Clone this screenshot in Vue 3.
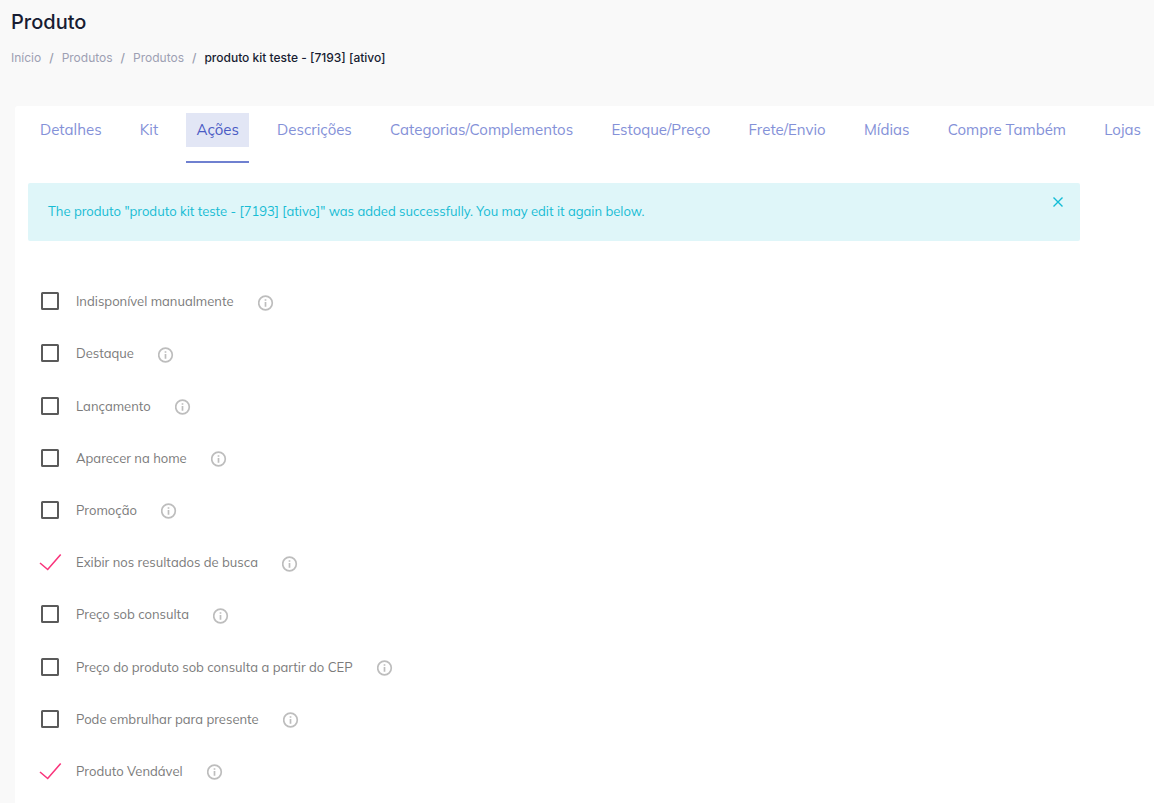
<script setup>
import { ref } from 'vue'

const crumbs = ['Início', 'Produtos', 'Produtos']
const tabs = [
  'Detalhes',
  'Kit',
  'Ações',
  'Descrições',
  'Categorias/Complementos',
  'Estoque/Preço',
  'Frete/Envio',
  'Mídias',
  'Compre Também',
  'Lojas',
]
const activeTab = ref('Ações')
const showAlert = ref(true)
const options = ref([
  { id: 'indisponivel', label: 'Indisponível manualmente', checked: false },
  { id: 'destaque', label: 'Destaque', checked: false },
  { id: 'lancamento', label: 'Lançamento', checked: false },
  { id: 'home', label: 'Aparecer na home', checked: false },
  { id: 'promocao', label: 'Promoção', checked: false },
  { id: 'busca', label: 'Exibir nos resultados de busca', checked: true },
  { id: 'consulta', label: 'Preço sob consulta', checked: false },
  { id: 'cep', label: 'Preço do produto sob consulta a partir do CEP', checked: false },
  { id: 'presente', label: 'Pode embrulhar para presente', checked: false },
  { id: 'vendavel', label: 'Produto Vendável', checked: true },
])
</script>

<template>
  <div class="page">
    <header class="header">
      <h1>Produto</h1>
      <nav class="crumbs" aria-label="Breadcrumb">
        <template v-for="(crumb, i) in crumbs" :key="i">
          <a href="#">{{ crumb }}</a>
          <span class="sep">/</span>
        </template>
        <span class="current">produto kit teste - [7193] [ativo]</span>
      </nav>
    </header>

    <main class="card">
      <nav class="tabs">
        <a
          v-for="tab in tabs"
          :key="tab"
          href="#"
          class="tab"
          :class="{ active: tab === activeTab }"
          @click.prevent="activeTab = tab"
        ><span class="tab-label">{{ tab }}</span></a>
      </nav>

      <div v-if="showAlert" class="alert" role="status">
        <span>The produto "produto kit teste - [7193] [ativo]" was added successfully. You may edit it again below.</span>
        <button type="button" class="close" aria-label="Close" @click="showAlert = false">
          <svg width="10" height="10" viewBox="0 0 10 10"><path d="M.5 .5L9.5 9.5M9.5 .5L.5 9.5" /></svg>
        </button>
      </div>

      <ul class="options">
        <li v-for="option in options" :key="option.id" class="option">
          <label :for="option.id" class="option-label">
            <input :id="option.id" v-model="option.checked" type="checkbox" class="native" />
            <svg v-if="option.checked" class="mark tick" width="24" height="20" viewBox="0 0 24 20">
              <path d="M2 11L9.7 17.5L22.7 2.5" />
            </svg>
            <svg v-else class="mark box" width="24" height="20" viewBox="0 0 24 20">
              <rect x="4" y="2" width="16" height="16" rx=".5" />
            </svg>
            <span>{{ option.label }}</span>
          </label>
          <svg class="info" width="16" height="16" viewBox="0 0 16 16">
            <circle cx="7.5" cy="8" r="6.8" />
            <path d="M7.5 4.2V5.8M7.5 7V11.8" />
          </svg>
        </li>
      </ul>
    </main>
  </div>
</template>

<style>
body {
  margin: 0;
  background: #f9f9f9;
  overflow: hidden;
}
</style>

<style scoped>
.page {
  box-sizing: border-box;
  min-height: 100vh;
  display: flex;
  flex-direction: column;
  font-family: Mulish, Muli, Lato, sans-serif;
  background: #f9f9f9;
}

.header {
  padding: 10px 11px 39px;
  font-family: Inter, sans-serif;
}

h1 {
  margin: 0;
  font-size: 20px;
  line-height: 24px;
  font-weight: 500;
  color: #181c32;
}

.crumbs {
  display: flex;
  gap: 8px;
  margin-top: 15px;
  font-size: 12px;
  line-height: 18px;
  font-weight: 500;
  color: #989cae;
}

.crumbs a {
  color: #9da0b3;
  font-weight: 400;
  text-decoration: none;
}

.crumbs .current {
  color: #181c32;
}

.card {
  flex: 1;
  display: flex;
  flex-direction: column;
  margin-left: 15px;
  padding-bottom: 6px;
  background: #fff;
  border-top-left-radius: 3px;
}

.tabs {
  display: flex;
  justify-content: space-between;
  padding: 7px 3px 0 15px;
  overflow: hidden;
}

.tab {
  flex: none;
  padding-bottom: 14px;
  border-bottom: 2px solid transparent;
  font-size: 15px;
  line-height: 34px;
  color: #8491d8;
  text-decoration: none;
}

.tab-label {
  display: block;
  padding: 0 10px;
}

.tab.active {
  color: #4a5bc4;
  border-bottom-color: #6f80d0;
}

.tab.active .tab-label {
  background: #e2e6f5;
}

.alert {
  display: flex;
  justify-content: space-between;
  align-items: flex-start;
  margin: 20px 74px 0 13px;
  padding: 14px 17px 16px 20px;
  border-radius: 2px;
  background: #dff6f9;
  color: #17bcd4;
  font-size: 13px;
  line-height: 28px;
}

.close {
  display: flex;
  padding: 0;
  border: 0;
  background: none;
  cursor: pointer;
}

.close path {
  fill: none;
  stroke: #12bcd6;
  stroke-width: 1.4;
}

.options {
  flex: 1;
  display: flex;
  flex-direction: column;
  margin: 34px 0 0;
  padding: 0 0 0 23px;
  list-style: none;
}

.option {
  flex: 1;
  display: flex;
  align-items: center;
  gap: 24px;
  min-height: 40px;
  font-size: 13px;
  line-height: 20px;
  color: #7b7b7b;
}

.option-label {
  position: relative;
  display: flex;
  align-items: center;
  gap: 14px;
}

.native {
  position: absolute;
  width: 24px;
  height: 20px;
  margin: 0;
  opacity: 0;
}

.mark {
  fill: none;
}

.box rect {
  stroke: #5a5a5a;
  stroke-width: 2;
}

.tick path {
  stroke: #f9357c;
  stroke-width: 1.6;
}

.info {
  fill: none;
  stroke: #bdbdbd;
  stroke-width: 1.7;
  margin-top: 3px;
}
</style>
